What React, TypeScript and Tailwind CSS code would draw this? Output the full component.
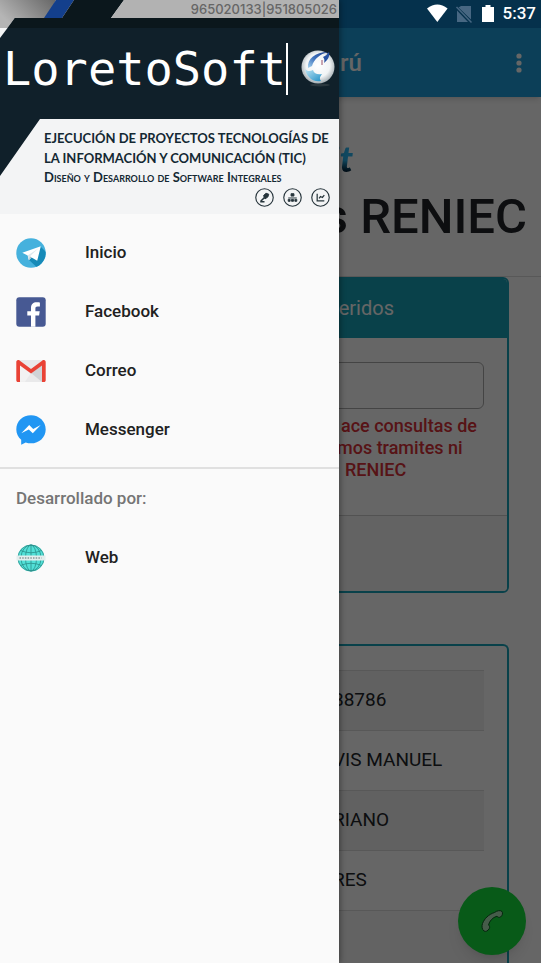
import React from 'react'

const TelegramIcon = () => (
  <svg viewBox="0 0 30 30" className="size-[30px]" aria-hidden="true">
    <defs>
      <clipPath id="telegramClip">
        <circle cx="15" cy="15" r="14.7" />
      </clipPath>
    </defs>
    <g clipPath="url(#telegramClip)">
      <rect width="30" height="30" fill="#45b1dd" />
      <path d="M24.5 8.5 36 20 26 34 12.5 21.5Z" fill="#168ab8" />
      <path d="M6.3 14.8 24.8 8.3 21.2 22.8 15.6 19.4 12.9 22.2 11.7 17.4Z" fill="#fff" />
      <path d="M11.7 17.4 22.3 10.6 14 18.2 12.9 22.2Z" fill="#dfe8ed" />
      <path d="M14 18.2 15.6 19.4 12.9 22.2Z" fill="#a9bfcb" />
    </g>
  </svg>
)

const FacebookIcon = () => (
  <svg viewBox="0 0 30 30" className="size-[30px]" aria-hidden="true">
    <rect x="0.3" y="0.3" width="29.4" height="29.4" rx="3" fill="#475993" />
    <path
      d="M15 29.700V18.600h-3.700v-4.400H15V11c0-3.700 2.300-5.700 5.600-5.700 1.600 0 2.900.1 3.300.2v3.900h-2.300c-1.800 0-2.200.9-2.200 2.100v2.700h4.300l-.6 4.400h-3.700v11.100Z"
      fill="#fff"
    />
  </svg>
)

const GmailIcon = () => (
  <svg viewBox="0 0 30 30" className="size-[30px]" aria-hidden="true">
    <rect x="1" y="4" width="28" height="22" rx="1.5" fill="#e9e9ea" />
    <path d="M15 17 26 8v18Z" fill="#d0d3d6" />
    <path d="M4 8.5 15 17 9 25.8H4Z" fill="#f2f2f2" />
    <path
      d="M2.1 4.1C.9 4.2.3 5 .3 6.2v18c0 1.2.6 1.8 1.8 1.8H4V9.6L15 17.6 26 9.6V26h1.9c1.2 0 1.8-.6 1.8-1.8v-18c0-1.2-.6-2-1.8-2.1-.7 0-1.2.1-1.8.6L15 12.9 3.9 4.7c-.6-.5-1.1-.6-1.8-.6Z"
      fill="#e94235"
    />
  </svg>
)

const MessengerIcon = () => (
  <svg viewBox="0 0 30 30" className="size-[30px]" aria-hidden="true">
    <path
      d="M15 .3C6.7.3.3 6.400.3 14.400c0 4.200 1.900 7.900 4.900 10.400v4.900l4.500-2.300c1.700.6 3.400.9 5.300.9 8.200 0 14.700-6 14.700-13.900S23.200.3 15 .3Z"
      fill="#2196f3"
    />
    <path d="M5.300 18.300 13.200 10.100 17.200 14 24.700 10 16.800 18.200 12.800 14.400Z" fill="#fff" />
  </svg>
)

const GlobeIcon = () => (
  <svg viewBox="0 0 30 30" className="size-[30px]" aria-hidden="true">
    <circle cx="15" cy="15" r="13.3" fill="#52e0d7" />
    <g fill="none" stroke="#2b908b" strokeWidth="0.8">
      <circle cx="15" cy="15" r="13" />
      <ellipse cx="15" cy="15" rx="5.5" ry="13" />
      <ellipse cx="15" cy="15" rx="10" ry="13" />
      <path d="M15 2v26M4.500 7.500Q15 12 25.500 7.500M4.500 22.500Q15 18 25.500 22.500" />
    </g>
    <rect x="0.5" y="12.5" width="29" height="5" fill="#e2eeed" />
    <path d="M3.500 15h22" stroke="#8b9899" strokeWidth="1.500" strokeDasharray="1.500 1.200" />
  </svg>
)

const SphereLogo = () => (
  <svg viewBox="0 0 36 42" className="h-[42px] w-9" aria-hidden="true">
    <defs>
      <radialGradient id="sphere" cx="50%" cy="45%" r="55%">
        <stop offset="0%" stopColor="#ffffff" />
        <stop offset="65%" stopColor="#f1f4f5" />
        <stop offset="100%" stopColor="#a4adb2" />
      </radialGradient>
      <linearGradient id="swirl" x1="1" y1="0" x2="0" y2="1">
        <stop offset="0%" stopColor="#1d3f8f" />
        <stop offset="55%" stopColor="#3f73bd" />
        <stop offset="100%" stopColor="#a5d3ee" />
      </linearGradient>
      <linearGradient id="wave" x1="0" y1="0" x2="1" y2="1">
        <stop offset="0%" stopColor="#bfe6f5" />
        <stop offset="100%" stopColor="#1f8fc6" />
      </linearGradient>
    </defs>
    <ellipse cx="20" cy="37" rx="10" ry="1.5" fill="#2a373e" />
    <circle cx="18" cy="19" r="16.500" fill="url(#sphere)" />
    {/* Upper blue band, pointed at the top right */}
    <path d="M8 20C7 11 15 4 28 4 20 6 14 11 12 18Z" fill="url(#swirl)" />
    <path d="M23 9c3-1 4-3 6-5 1 4-1 8-5 11 1-3 0-5-1-6Z" fill="#2652a3" />
    {/* Lower cyan band */}
    <path d="M5 21c3 3 5 2 8 1 1 4 5 5 9 4-2 3-3 4-1 7-4 1-9 0-12-4-2-2-3-4-4-8Z" fill="url(#wave)" />
    <path d="M22 12v5" stroke="#9a5068" strokeWidth="1" />
  </svg>
)

const PhoneGlyph = () => (
  <svg viewBox="0 0 24 24" className="size-6" aria-hidden="true">
    <path
      d="M14.500 3.500C17 1.500 20.500 1 22 2.500c1 1.500.5 4-1.500 5.500-1.500.8-2.500.3-3.500-.8-4.500 1.300-7.500 4.800-8.500 8.800 1 .8 1.500 2 .8 3.500C8 22 5.500 23 4 22 2 20.500 1.500 17.500 2.500 14.500 4.500 9.500 8.500 5.500 14.500 3.500Z"
      fill="#b0e6ba"
      stroke="#0d5c22"
      strokeWidth="1"
    />
  </svg>
)

const StatusIcons = () => (
  <svg viewBox="0 0 68 20" className="h-5 w-[68px]" aria-hidden="true">
    <path d="M0 4.500q10.300-8 20.600 0L10.300 18Z" fill="#fff" />
    <path d="M34 2h10v13.500L31.500 3.500ZM30 6.500 41 18H30Z" fill="#476782" />
    <path d="m29.500 3 15 15.500" stroke="#476782" strokeWidth="1.500" />
    <path d="M55 3h3.500V1h5v2H67v15H55Z" fill="#fff" />
  </svg>
)

const BadgeIcon: React.FC<{ children: React.ReactNode }> = ({ children }) => (
  <svg viewBox="0 0 20 20" className="size-[19px]" fill="none" stroke="#26343b" aria-hidden="true">
    <circle cx="10" cy="10" r="9.2" strokeWidth="1.2" />
    {children}
  </svg>
)

const menuItems = [
  { label: 'Inicio', icon: <TelegramIcon /> },
  { label: 'Facebook', icon: <FacebookIcon /> },
  { label: 'Correo', icon: <GmailIcon /> },
  { label: 'Messenger', icon: <MessengerIcon /> }
]

const results = ['88786', 'VIS MANUEL', 'RIANO', 'RES']

const MenuLink: React.FC<{ label: string; icon: React.ReactNode }> = ({ label, icon }) => (
  <li>
    <a href="#" className="flex h-[59px] items-center gap-[39px] px-4 text-[17px] font-medium text-[#212121]">
      {icon}
      {label}
    </a>
  </li>
)

const Banner = () => (
  <header className="relative text-[#142833]">
    {/* Diagonal shapes behind the banner text */}
    <svg viewBox="0 0 339 214" preserveAspectRatio="none" className="absolute inset-0 size-full" aria-hidden="true">
      <defs>
        <linearGradient id="steel" x1="0" y1="0.5" x2="1" y2="0">
          <stop offset="0%" stopColor="#b5b5b5" />
          <stop offset="100%" stopColor="#666" />
        </linearGradient>
      </defs>
      <rect width="339" height="214" fill="#f3f4f5" />
      <path d="M0 0H56L44 28H0Z" fill="url(#steel)" />
      <path d="M56 0H74L62 18H44Z" fill="#133f8c" />
      <path d="M74 0H124L111 18H62Z" fill="#0b171c" />
      <path d="M124 0H339V18H111Z" fill="#b2b2b2" />
      <path d="M15 18H339V119H40L0 176V38Z" fill="#10202a" />
      <path d="M15 18H339V28H8Z" fill="#0b171c" />
    </svg>
    <div className="relative">
      <p className="h-[18px] pr-0.5 text-right font-['Inter',sans-serif] text-[13px] leading-[18px] font-medium text-[#666]">
        965020133|951805026
      </p>
      <div className="flex h-[101px] items-center justify-end pr-[3px]">
        <h1 className="font-['DejaVu_Sans_Mono',monospace] text-[47px] leading-none text-white">LoretoSoft</h1>
        <span className="mr-3 h-[52px] w-0.5 bg-white" />
        <SphereLogo />
      </div>
      <div className="h-[95px] pt-[9px] pl-11 font-['Lato',sans-serif]">
        <p className="text-[13px] leading-5 font-bold whitespace-nowrap">
          EJECUCIÓN DE PROYECTOS TECNOLOGÍAS DE
          <br />
          LA INFORMACIÓN Y COMUNICACIÓN (TIC)
        </p>
        <p className="text-[13px] leading-[18px] font-bold whitespace-nowrap [font-variant:small-caps]">
          Diseño y Desarrollo de Software Integrales
        </p>
        <div className="flex justify-end gap-[9px] pt-0.5 pr-[9px]">
          <BadgeIcon>
            <path d="m6 14 4-4M5.500 14.500H10" strokeWidth="1.600" />
            <path d="m9 8 2.500-2.500 3 1-1 3-3 2Z" fill="#26343b" />
          </BadgeIcon>
          <BadgeIcon>
            <path d="M8.500 6h3v2.500h-3zM5.500 12h2v2h-2zM9 12h2v2H9zM12.500 12h2v2h-2zM5.500 10.500h9" fill="#26343b" />
          </BadgeIcon>
          <BadgeIcon>
            <path d="M6.500 6v7.500H14M8.500 11l1.500-2 2 1 2-2.500" strokeWidth="1.300" />
          </BadgeIcon>
        </div>
      </div>
    </div>
  </header>
)

const Drawer = () => (
  <aside className="absolute inset-y-0 left-0 w-[339px] bg-[#fafafa] shadow-[1px_0_6px_rgba(0,0,0,0.4)]">
    <Banner />
    <nav>
      <ul className="border-b-2 border-[#e0e0e0] pt-[9px] pb-2">
        {menuItems.map((item) => (
          <MenuLink key={item.label} label={item.label} icon={item.icon} />
        ))}
      </ul>
      <h2 className="flex h-[59px] items-center px-4 text-[17px] font-medium text-[#757575]">Desarrollado por:</h2>
      <ul>
        <MenuLink label="Web" icon={<GlobeIcon />} />
      </ul>
    </nav>
  </aside>
)

const Page = () => (
  <div className="flex min-h-screen flex-col bg-white">
    <header className="bg-[#1e9fdb] shadow-md">
      <div className="h-7 bg-[#0e7bbd]" />
      <div className="flex h-[69px] items-center justify-between pr-2.5 pl-[340px]">
        <span className="text-[24px] font-medium text-white">rú</span>
        <button type="button" aria-label="Más opciones" className="text-white">
          <svg viewBox="0 0 24 24" className="size-6" fill="currentColor" aria-hidden="true">
            <circle cx="12" cy="5" r="2.600" />
            <circle cx="12" cy="12" r="2.600" />
            <circle cx="12" cy="19" r="2.600" />
          </svg>
        </button>
      </div>
    </header>
    <main className="flex grow flex-col">
      <div className="border-b border-[#ddd] pt-9 pr-[14px] text-right">
        <p className="pr-[170px] text-[36px] leading-[50px]">
          <span className="bg-linear-to-b from-[#2cb5f0] from-55% to-[#04243a] to-80% bg-clip-text pr-1 font-['Lato',sans-serif] font-black text-transparent italic">
            it
          </span>
        </p>
        <p className="h-[91px] pt-0.5 text-[49px] leading-[60px] font-medium text-[#212529]">s RENIEC</p>
      </div>
      <section className="mx-8 overflow-hidden rounded-md border-2 border-[#17a2b8]">
        <h2 className="h-[59px] bg-[#17a2b8] pr-[113px] text-right text-[20px] leading-[59px] text-white">eridos</h2>
        <div className="h-[177px] px-[23px] pt-6">
          <input aria-label="Número" className="h-[47px] w-full rounded-md border border-[#aaa]" />
          <p className="pt-1.5 pl-[280px] text-[18px] leading-[22px] font-medium whitespace-nowrap text-[#d93038]">
            <span className="block pl-1">ace consultas de</span>
            <span className="block">mos tramites ni</span>
            <span className="block pl-2">RENIEC</span>
          </p>
        </div>
        <div className="h-[76px] border-t border-[#ccc] bg-[#f7f7f7]" />
      </section>
      <section className="mx-8 mt-[51px] grow rounded-t-md border-2 border-b-0 border-[#17a2b8] px-[23px] pt-6">
        <table className="w-full border-b border-[#ddd] text-[19px] text-[#212529]">
          <tbody>
            {results.map((value) => (
              <tr key={value} className="h-[60px] border-t border-[#ddd] odd:bg-[#f2f2f2]">
                <td className="pl-[276px] whitespace-nowrap">{value}</td>
              </tr>
            ))}
          </tbody>
        </table>
        <div className="-mx-[23px] h-16 bg-[#f7f7f7]" />
      </section>
    </main>
  </div>
)

export default function App() {
  return (
    <div className="relative h-screen overflow-hidden font-['Roboto',sans-serif]">
      <Page />
      <button
        type="button"
        aria-label="Llamar"
        className="absolute right-[15px] bottom-2 flex size-[68px] items-center justify-center rounded-full bg-[#14e03c] shadow-lg"
      >
        <PhoneGlyph />
      </button>
      <div className="absolute inset-0 bg-black/60" />
      <Drawer />
      <div className="absolute top-0 right-0 flex h-7 items-center gap-2 pr-[5px] text-[17px] font-medium text-white">
        <StatusIcons />
        5:37
      </div>
    </div>
  )
}
